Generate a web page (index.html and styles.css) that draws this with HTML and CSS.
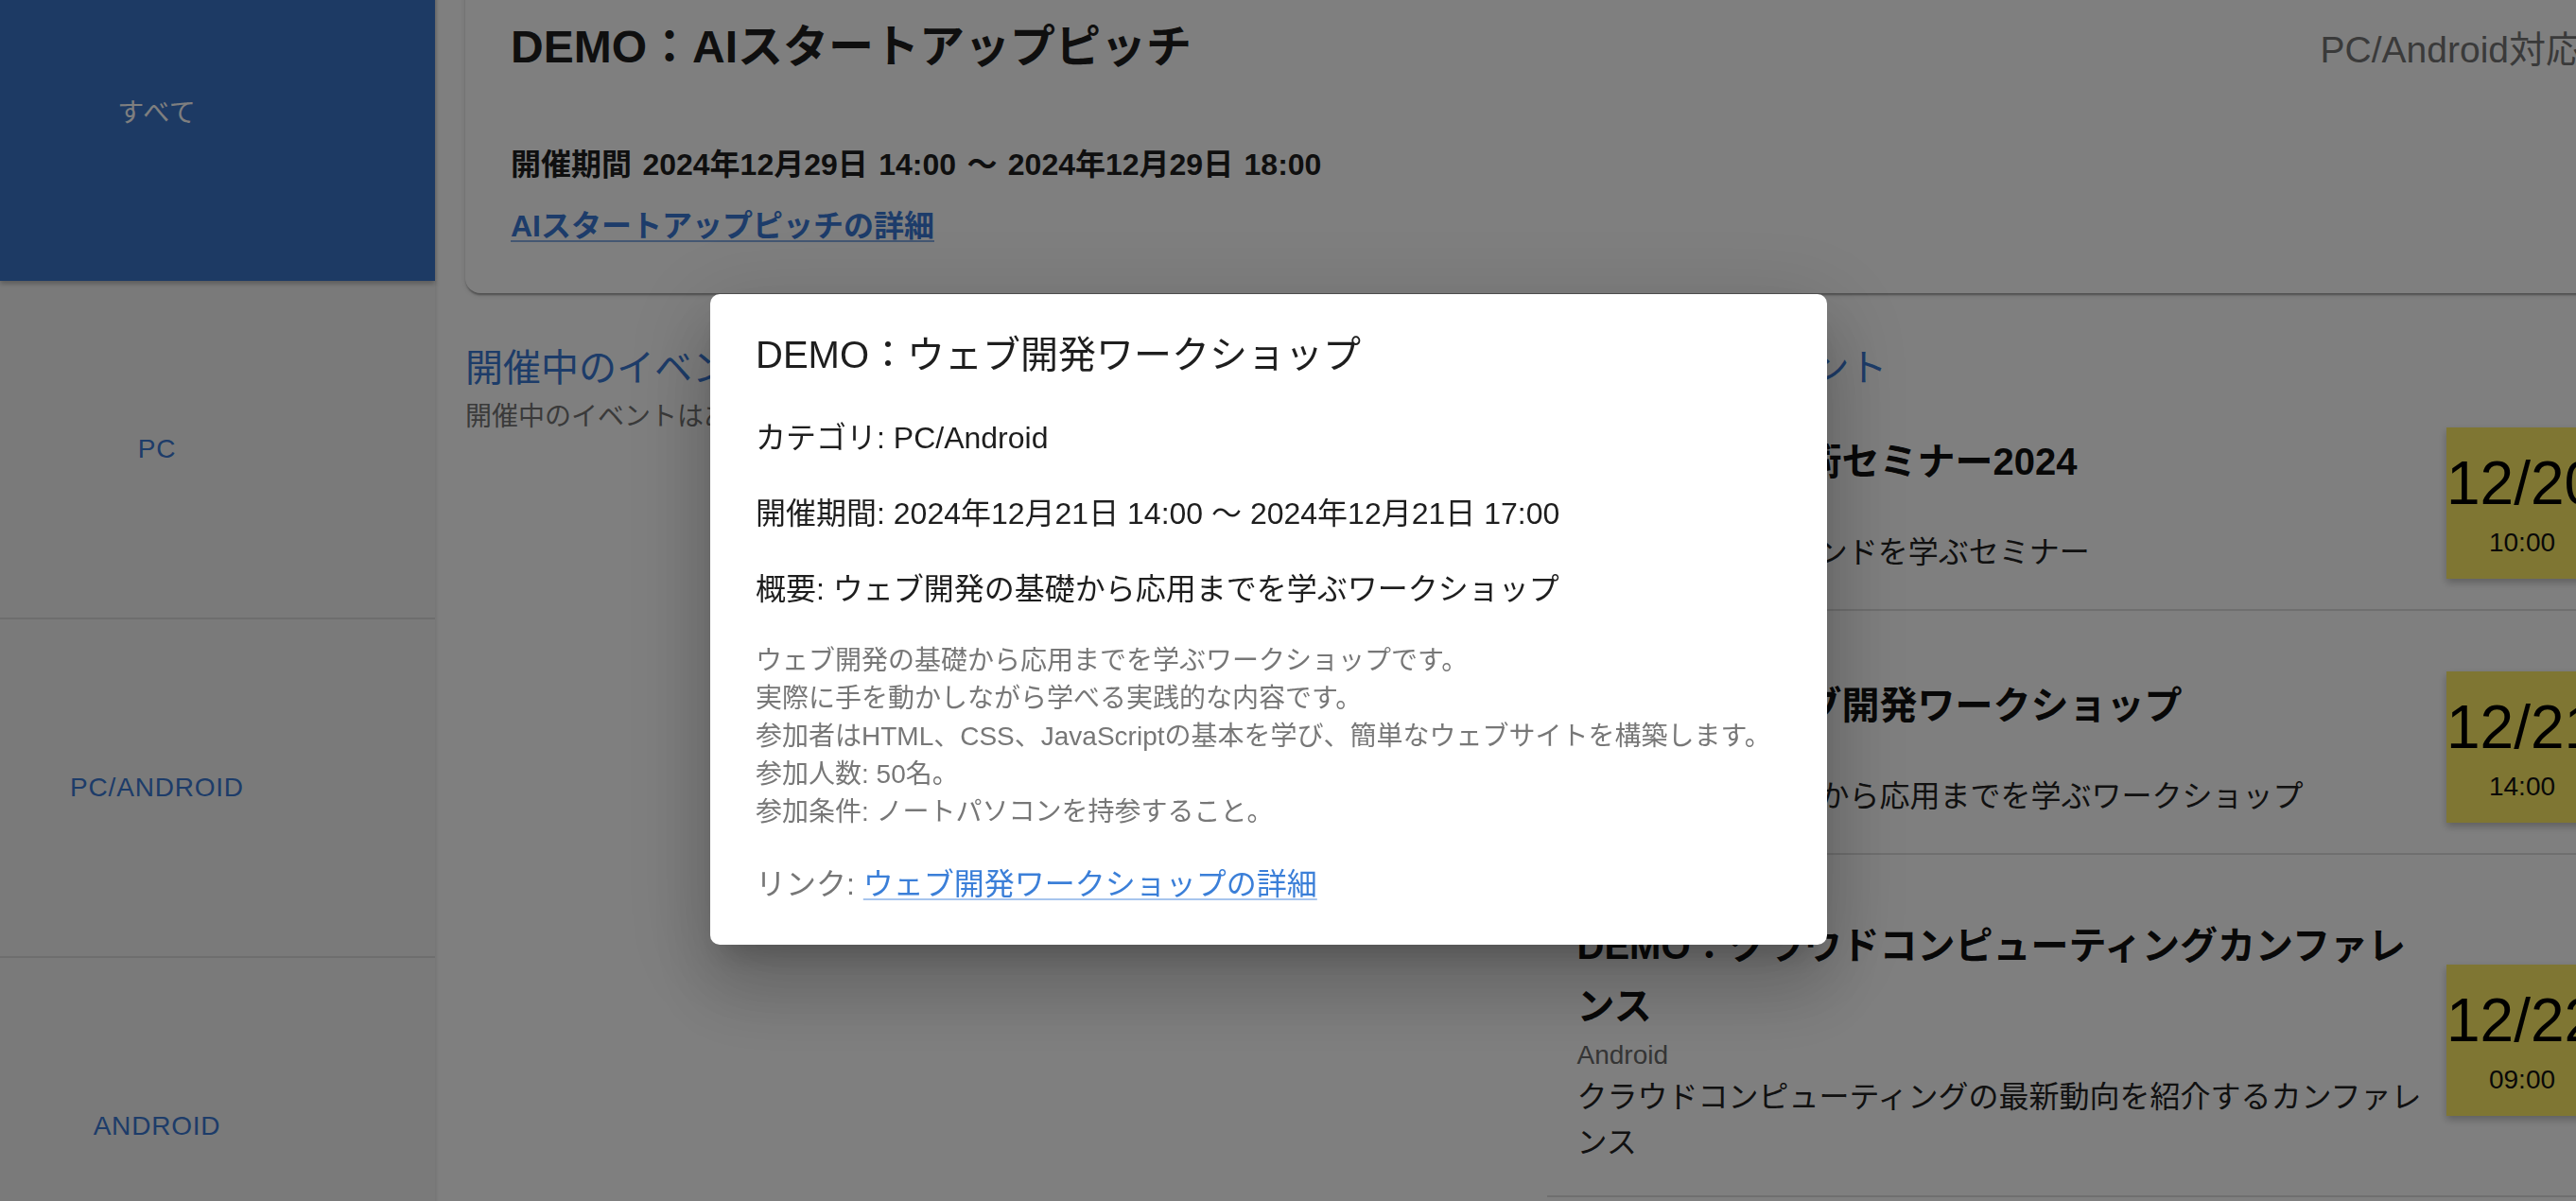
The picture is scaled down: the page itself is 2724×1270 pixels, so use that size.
FILE: index.html
```html
<!DOCTYPE html>
<html lang="ja">
<head>
<meta charset="utf-8">
<title>イベント一覧</title>
<link rel="stylesheet" href="styles.css">
</head>
<body>
<div class="page">
  <aside class="sidebar">
    <div class="tab active">すべて</div>
    <div class="tab">PC</div>
    <div class="tab">PC/Android</div>
    <div class="tab">Android</div>
  </aside>
  <main class="main">
    <section class="card">
      <div class="card-head">
        <h1 class="card-title">DEMO：AIスタートアップピッチ</h1>
        <span class="card-cat">PC/Android対応</span>
      </div>
      <p class="card-period">開催期間 2024年12月29日 14:00 〜 2024年12月29日 18:00</p>
      <a class="card-link" href="#">AIスタートアップピッチの詳細</a>
    </section>
    <div class="columns">
      <section class="col">
        <h2 class="col-title">開催中のイベント</h2>
        <p class="col-sub">開催中のイベントはありません</p>
      </section>
      <section class="col">
        <h2 class="col-title">開催予定のイベント</h2>
        <ul class="events">
          <li class="event">
            <div class="event-text">
              <h3 class="event-title">DEMO：AI技術セミナー2024</h3>
              <div class="event-cat">PC</div>
              <p class="event-desc">最新のAI技術トレンドを学ぶセミナー</p>
            </div>
            <div class="badge"><div class="badge-date">12/20</div><div class="badge-time">10:00</div></div>
          </li>
          <li class="event">
            <div class="event-text">
              <h3 class="event-title">DEMO：ウェブ開発ワークショップ</h3>
              <div class="event-cat">PC/Android</div>
              <p class="event-desc">ウェブ開発の基礎から応用までを学ぶワークショップ</p>
            </div>
            <div class="badge"><div class="badge-date">12/21</div><div class="badge-time">14:00</div></div>
          </li>
          <li class="event">
            <div class="event-text">
              <h3 class="event-title">DEMO：クラウドコンピューティングカンファレンス</h3>
              <div class="event-cat">Android</div>
              <p class="event-desc">クラウドコンピューティングの最新動向を紹介するカンファレンス</p>
            </div>
            <div class="badge"><div class="badge-date">12/22</div><div class="badge-time">09:00</div></div>
          </li>
        </ul>
      </section>
    </div>
  </main>
</div>

<div class="backdrop"></div>
<div class="dialog" role="dialog">
  <h2 class="dialog-title">DEMO：ウェブ開発ワークショップ</h2>
  <div class="dialog-body">
    <p class="dialog-line">カテゴリ: PC/Android</p>
    <p class="dialog-line">開催期間: 2024年12月21日 14:00 〜 2024年12月21日 17:00</p>
    <p class="dialog-line">概要: ウェブ開発の基礎から応用までを学ぶワークショップ</p>
    <div class="dialog-desc">
      <div>ウェブ開発の基礎から応用までを学ぶワークショップです。</div>
      <div>実際に手を動かしながら学べる実践的な内容です。</div>
      <div>参加者はHTML、CSS、JavaScriptの基本を学び、簡単なウェブサイトを構築します。</div>
      <div>参加人数: 50名。</div>
      <div>参加条件: ノートパソコンを持参すること。</div>
    </div>
    <p class="dialog-link-line">リンク: <a class="dialog-link" href="#">ウェブ開発ワークショップの詳細</a></p>
  </div>
</div>
</body>
</html>
```

FILE: styles.css
```css
* {
  box-sizing: border-box;
}

html,
body {
  margin: 0;
  overflow: hidden;
  background: #ffffff;
}

body {
  width: 2724px;
  height: 1270px;
  font-family: "Liberation Sans", "Noto Sans CJK JP", sans-serif;
  color: #212121;
}

.page {
  display: flex;
  width: 2811px;
  min-height: 1331px;
  margin-top: -61px;
}

/* Sidebar tabs */
.sidebar {
  width: 460px;
  flex-shrink: 0;
  background: #f5f5f5;
  box-shadow: 2px 0 3px rgba(0, 0, 0, 0.08);
  position: relative;
  z-index: 1;
}

.tab {
  height: 358px;
  display: flex;
  align-items: center;
  justify-content: center;
  padding-right: 128px;
  font-size: 28px;
  letter-spacing: 0.8px;
  text-transform: uppercase;
  color: #3b78d2;
  border-bottom: 2px solid #dcdcdc;
}

.tab.active {
  background: #3a74c9;
  color: #ffffff;
  border-bottom-color: #3a74c9;
  box-shadow: 0 3px 5px rgba(0, 0, 0, 0.25);
  position: relative;
}

/* Main */
.main {
  flex: 1;
  padding: 32px;
}

.card {
  background: #ffffff;
  border-radius: 16px;
  padding: 47px 48px;
  box-shadow: 0 4px 2px -2px rgba(0, 0, 0, 0.2), 0 2px 2px rgba(0, 0, 0, 0.14), 0 2px 6px rgba(0, 0, 0, 0.12);
}

.card-head {
  display: flex;
  justify-content: space-between;
  align-items: baseline;
}

.card-title {
  margin: 0;
  font-size: 48px;
  line-height: 64px;
  font-weight: 700;
  color: #1e1e1e;
}

.card-cat {
  font-size: 39px;
  line-height: 64px;
  color: #757575;
}

.card-period {
  margin: 65px 0 0;
  font-size: 32px;
  line-height: 48px;
  font-weight: 700;
  word-spacing: 2.5px;
  color: #1e1e1e;
}

.card-link {
  display: block;
  margin-top: 17px;
  font-size: 32px;
  line-height: 48px;
  font-weight: 700;
  color: #3a78d4;
  text-decoration: underline;
  text-decoration-color: rgba(58, 120, 212, 0.6);
  text-decoration-thickness: 2px;
  text-underline-offset: 4px;
}

.columns {
  display: grid;
  grid-template-columns: 1fr 1fr;
  margin-top: 47px;
}

.col-title {
  margin: 0;
  font-size: 40px;
  line-height: 64px;
  font-weight: 400;
  color: #3b78d2;
}

.col-sub {
  margin: 0;
  font-size: 28px;
  line-height: 40px;
  color: #757575;
}

.events {
  list-style: none;
  margin: -2px 0 0;
  padding: 0;
}

.event {
  display: flex;
  align-items: center;
  gap: 16px;
  padding: 33px 32px 32px;
  border-bottom: 2px solid #dedede;
  margin-bottom: 31px;
}

.event-text {
  flex: 1;
  min-width: 0;
}

.event-title {
  margin: 0;
  font-size: 40px;
  line-height: 64px;
  font-weight: 700;
  color: #111111;
}

.event-cat {
  font-size: 28px;
  line-height: 40px;
  color: #6b6b6b;
}

.event-desc {
  margin: 0;
  font-size: 32px;
  line-height: 48px;
  color: #222222;
}

.badge {
  width: 160px;
  height: 160px;
  flex-shrink: 0;
  background: #ffed66;
  box-shadow: 0 4px 8px rgba(0, 0, 0, 0.25);
  text-align: center;
  padding-top: 27px;
  color: #000000;
}

.badge-date {
  font-size: 64px;
  line-height: 64px;
  white-space: nowrap;
}

.badge-time {
  margin-top: 11px;
  font-size: 28px;
  line-height: 40px;
  color: #111111;
}

/* Dialog */
.backdrop {
  position: fixed;
  inset: 0;
  z-index: 10;
  background: rgba(0, 0, 0, 0.5);
}

.dialog {
  position: fixed;
  left: 751px;
  top: 311px;
  z-index: 11;
  width: 1181px;
  background: #ffffff;
  border-radius: 10px;
  box-shadow: 0 22px 30px -14px rgba(0, 0, 0, 0.2), 0 48px 76px 6px rgba(0, 0, 0, 0.14), 0 18px 92px 16px rgba(0, 0, 0, 0.12);
}

.dialog-title {
  margin: 0;
  padding: 32px 48px 0;
  font-size: 40px;
  line-height: 64px;
  font-weight: 400;
  color: #1e1e1e;
}

.dialog-body {
  padding: 0 48px 40px;
}

.dialog-line {
  margin: 32px 0 0;
  font-size: 32px;
  line-height: 48px;
  color: #1e1e1e;
}

.dialog-desc {
  margin-top: 32px;
  font-size: 28px;
  line-height: 40px;
  color: #777777;
  white-space: nowrap;
}

.dialog-link-line {
  margin: 32px 0 0;
  font-size: 32px;
  line-height: 48px;
  color: #777777;
}

.dialog-link {
  color: #3b7fd8;
  text-decoration: underline;
  text-decoration-color: rgba(59, 127, 216, 0.45);
  text-decoration-thickness: 2px;
  text-underline-offset: 4px;
}
```
